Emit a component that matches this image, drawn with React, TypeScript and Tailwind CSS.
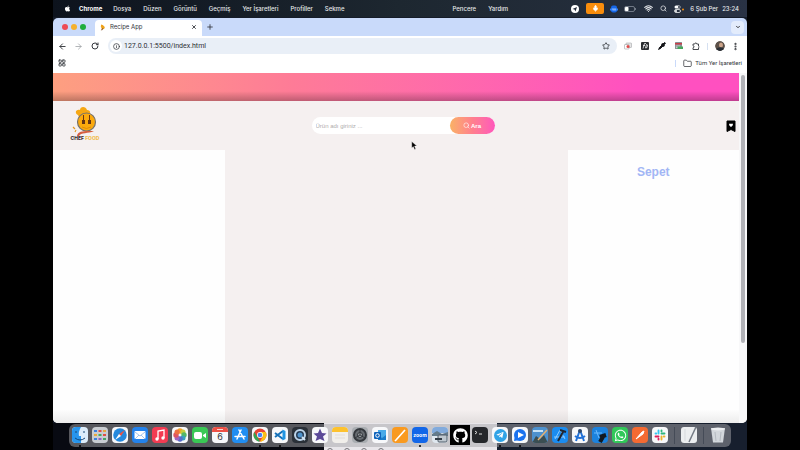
import type { ReactNode } from "react";
import {
  ArrowLeft,
  ArrowRight,
  ChevronDown,
  EllipsisVertical,
  Folder,
  Info,
  LayoutGrid,
  Mic,
  Pipette,
  Plus,
  RotateCw,
  Search,
  Star,
  Wifi,
  X,
} from "lucide-react";
import { FaApple, FaGithub, FaTelegramPlane, FaWhatsapp } from "react-icons/fa";

const menus = ["Dosya", "Düzen", "Görüntü", "Geçmiş", "Yer İşaretleri", "Profiller", "Sekme"];

function IconButton({ label, children, className = "" }: { label: string; children?: ReactNode; className?: string }) {
  return (
    <button type="button" aria-label={label} className={`flex shrink-0 items-center justify-center ${className}`}>
      {children}
    </button>
  );
}

function MenuBar() {
  return (
    <header className="flex h-[17px] shrink-0 items-center bg-linear-to-r from-[#0d131d] via-[#1d2730] to-[#293244] pr-2 pl-[11px] text-[6px] leading-[8px] font-medium text-[#e6e8eb]">
      <FaApple className="size-[7px] text-white" />
      <span className="ml-[8px] font-bold text-white">Chrome</span>
      <nav className="ml-[11px] flex flex-1 gap-[12px] whitespace-nowrap">
        {menus.map((m) => (
          <button type="button" key={m}>{m}</button>
        ))}
        <button type="button" className="ml-[96px]">Pencere</button>
        <button type="button">Yardım</button>
      </nav>
      <div className="flex items-center">
        <svg viewBox="0 0 16 16" className="size-[8px]">
          <circle cx="8" cy="8" r="8" fill="#fff" />
          <path d="M3 8l9-4-3 9-2-4z" fill="#222a38" />
        </svg>
        <span className="ml-[7px] flex h-[11px] w-[18px] items-center justify-center rounded-[2px] bg-[#f98d0c]">
          <Mic className="size-[7px] fill-white text-white" />
        </span>
        <svg viewBox="0 0 16 16" className="ml-[6px] size-[8px]">
          <rect x="2" y="1" width="12" height="14" rx="4" fill="#1667e8" />
          <path d="M0 7h16v4H0z" fill="#2f80ff" />
          <path d="M4 8h8M5 10h7" stroke="#dbe8ff" />
        </svg>
        <svg viewBox="0 0 24 12" className="ml-[6px] h-[6px] w-[12px]">
          <rect x="1" y="1" width="20" height="10" rx="3" fill="none" stroke="#8a919d" strokeWidth="1.5" />
          <rect x="2" y="2" width="7" height="8" rx="1.5" fill="#fff" />
          <path d="M23 4v4" stroke="#8a919d" strokeWidth="1.5" />
        </svg>
        <Wifi strokeWidth={3} className="ml-[8px] size-[9px]" />
        <Search strokeWidth={2.5} className="ml-[7px] size-[7px]" />
        <svg viewBox="0 0 20 16" className="ml-[6px] h-[8px] w-[12px]">
          <rect x="1" y="1" width="12" height="6" rx="3" fill="#fff" />
          <rect x="1" y="9" width="12" height="6" rx="3" fill="none" stroke="#fff" strokeWidth="1.5" />
          <circle cx="10" cy="4" r="2" fill="#28303f" />
          <circle cx="4" cy="12" r="2" fill="#fff" />
          <circle cx="18" cy="9" r="2" fill="#f98d0c" />
        </svg>
        <span className="ml-[5px] whitespace-nowrap">6 Şub Per</span>
        <time className="ml-[4px]">23:24</time>
      </div>
    </header>
  );
}

function TabStrip() {
  return (
    <div className="flex h-[18px] shrink-0 items-center bg-[#c9dafa] pr-[3px] pl-[9px]">
      <div className="flex gap-[3px]">
        <IconButton label="Kapat" className="size-[6px] rounded-full bg-[#ee4b55]" />
        <IconButton label="Küçült" className="size-[6px] rounded-full bg-[#f5b02c]" />
        <IconButton label="Büyüt" className="size-[6px] rounded-full bg-[#1fae3c]" />
      </div>
      <div className="ml-[9px] flex h-[16px] w-[107px] items-center self-end rounded-t-[4px] bg-white pr-[5px] pb-[2px] pl-[4px] text-[6px] leading-[8px] text-[#33363b]">
        <svg viewBox="0 0 16 16" className="size-[7px]">
          <path d="M5 1l5 2-1 5-5-2z" fill="#f0a31c" />
          <circle cx="9" cy="8" r="4" fill="#eea21a" />
          <path d="M4 14l4-5 2 2-3 3z" fill="#8b572a" />
        </svg>
        <span className="ml-[4px] flex-1">Recipe App</span>
        <IconButton label="Sekmeyi kapat"><X strokeWidth={3.5} className="size-[6px]" /></IconButton>
      </div>
      <IconButton label="Yeni sekme" className="ml-[4px]"><Plus strokeWidth={2.5} className="size-[8px] text-[#30343b]" /></IconButton>
      <IconButton label="Sekme ara" className="ml-auto size-[13px] rounded-[4px] bg-[#e3ecfc]">
        <ChevronDown strokeWidth={3} className="size-[6px]" />
      </IconButton>
    </div>
  );
}

function Toolbar() {
  return (
    <div className="flex h-[20px] shrink-0 items-center bg-white pr-[7px] pl-[5px] text-[#34373c]">
      <IconButton label="Geri"><ArrowLeft strokeWidth={2.5} className="size-[9px]" /></IconButton>
      <IconButton label="İleri" className="ml-[7px]"><ArrowRight strokeWidth={2} className="size-[9px] text-[#9a9da2]" /></IconButton>
      <IconButton label="Yenile" className="ml-[8px]"><RotateCw strokeWidth={3} className="size-[8px]" /></IconButton>
      <div className="ml-[9px] flex h-[16px] flex-1 items-center rounded-full bg-[#e9eff7] pr-[7px] pl-[2px]">
        <IconButton label="Site bilgileri" className="size-[12px] rounded-full bg-white"><Info strokeWidth={2.5} className="size-[7px]" /></IconButton>
        <input
          aria-label="Adres"
          defaultValue="127.0.0.1:5500/index.html"
          className="ml-[2px] min-w-0 flex-1 bg-transparent font-['Roboto',sans-serif] text-[7px] leading-[8px] text-[#2d3034] outline-none"
        />
        <IconButton label="Yer işareti ekle"><Star strokeWidth={2.5} className="size-[8px]" /></IconButton>
      </div>
      <div className="ml-[7px] flex items-center gap-[9px]">
        <IconButton label="Ekran görüntüsü">
          <svg viewBox="0 0 16 16" className="size-[8px]">
            <rect x="4" y="2" width="11" height="9" rx="1" fill="#e6e6e6" stroke="#97999c" />
            <rect x="1" y="5" width="9" height="9" rx="1" fill="#fff" stroke="#8b8d91" />
            <circle cx="8" cy="9" r="3" fill="#e04a48" />
          </svg>
        </IconButton>
        <IconButton label="Yazı tipi bulucu">
          <svg viewBox="0 0 16 16" className="size-[8px]">
            <rect width="16" height="16" rx="2" fill="#2b2d31" />
            <path d="M4 13L7 3h3M4 7h4M9 12l2-7 2 1-1 5z" fill="none" stroke="#fff" strokeWidth="1.5" />
          </svg>
        </IconButton>
        <IconButton label="Renk seçici"><Pipette strokeWidth={3} className="size-[8px] fill-[#16181b] text-[#16181b]" /></IconButton>
        <IconButton label="Form doldurucu">
          <svg viewBox="0 0 16 16" className="size-[8px]">
            <rect width="14" height="14" rx="1" fill="#8d9196" />
            <path d="M0 2h14v3H0z" fill="#ca3d49" />
            <path d="M2 8h8M2 11h5" stroke="#fff" />
            <path d="M5 9h11v5H5z" fill="#46a75c" />
          </svg>
        </IconButton>
        <IconButton label="Uzantılar">
          <svg viewBox="0 0 16 16" className="size-[8px]">
            <path d="M2 4h3.500a2 2 0 0 1 4 0H13v4a2 2 0 0 1 0 3.500V15H2v-3.500a2 2 0 0 0 0-4z" fill="none" stroke="#34373c" strokeWidth="1.800" strokeLinejoin="round" />
          </svg>
        </IconButton>
      </div>
      <span className="ml-[7px] h-[7px] w-px bg-[#d5e0f1]" />
      <IconButton label="Profil" className="ml-[7px]">
        <svg viewBox="0 0 20 20" className="size-[10px] rounded-full">
          <circle cx="10" cy="10" r="10" fill="#5c5149" />
          <ellipse cx="12" cy="8" rx="4" ry="5" fill="#cda58b" />
          <path d="M2 17c4-6 14-6 16 0l-5 3H6z" fill="#292e35" />
        </svg>
      </IconButton>
      <IconButton label="Menü" className="ml-[6px]"><EllipsisVertical strokeWidth={3.5} className="size-[9px]" /></IconButton>
    </div>
  );
}

function BookmarksBar() {
  return (
    <div className="flex h-[17px] shrink-0 items-center bg-white px-[5px] pb-[3px] font-['Roboto',sans-serif] text-[6px] leading-[8px] text-[#34373c]">
      <IconButton label="Uygulamalar"><LayoutGrid strokeWidth={2.5} className="size-[8px]" /></IconButton>
      <span className="ml-auto h-[7px] w-px bg-[#c9dafa]" />
      <button type="button" className="ml-[7px] flex items-center gap-[3px] whitespace-nowrap">
        <Folder strokeWidth={2} className="size-[9px]" />
        Tüm Yer İşaretleri
      </button>
    </div>
  );
}

function ChefLogo() {
  return (
    <a href="#" aria-label="Chef Food" className="flex w-[34px] flex-col items-center pb-[3px]">
      <svg viewBox="0 0 34 30" className="h-[30px] w-[34px]">
        <path d="M10 8c-4-2-2-6 2-5 0-4 6-4 7 0 4 0 4 4 1 5l-9 2z" fill="#f6a713" />
        <circle cx="18.500" cy="15" r="9" fill="#fba90d" stroke="#77736c" strokeWidth="1.200" />
        <path d="M15.500 8v6M21.500 8v6" stroke="#653413" strokeWidth="1" />
        <path d="M14 13h3v4h-3zM20 13h3v4h-3z" fill="#653413" />
        <path d="M14 20q4.500 3 9 0" fill="none" stroke="#d88709" strokeWidth=".8" />
        <path d="M9 29c1-6 9-5 17-5-6 3-13 1-15 5z" fill="#d65f3f" />
        <path d="M5 20l2 2M8 23l-1 2" stroke="#e29a26" strokeWidth="1.200" />
      </svg>
      <span className="-mt-px text-[5px] leading-[5px] font-extrabold whitespace-nowrap text-[#3a302f]">
        CHEF <span className="text-[#f2bd4e]">FOOD</span>
      </span>
    </a>
  );
}

function RecipePage() {
  return (
    <div className="flex min-h-0 flex-1 bg-white">
      <div className="flex min-w-0 flex-1 flex-col bg-[#f5f0f0]">
        <div className="h-[28px] shrink-0 bg-linear-to-r from-[#fd9f80] via-[#fe7b97] via-35% to-[#ff50c0] to-85%">
          <div className="h-full bg-linear-to-b from-transparent from-65% to-black/25" />
        </div>
        <div className="flex h-[49px] shrink-0 items-center justify-between pr-[3px] pl-[15px]">
          <ChefLogo />
          <form className="flex h-[17px] w-[183px] rounded-full bg-white" onSubmit={(e) => e.preventDefault()}>
            <input
              aria-label="Ürün adı"
              placeholder="Ürün adı giriniz ..."
              className="min-w-0 flex-1 pl-[4px] font-['Liberation_Sans',sans-serif] text-[6px] leading-[8px] outline-none placeholder:text-[#b0acac]"
            />
            <button
              type="submit"
              className="flex w-[45px] items-center justify-center gap-px rounded-full bg-linear-to-r from-[#f9b164] via-[#ff7f8d] to-[#ff56bb] font-['Liberation_Sans',sans-serif] text-[6px] leading-[8px] font-bold text-white"
            >
              <Search strokeWidth={2} className="size-[7px]" />
              Ara
            </button>
          </form>
          <div className="flex w-[32px] justify-end">
            <IconButton label="Kaydedilenler">
              <svg viewBox="0 0 10 12" className="h-[12px] w-[10px]">
                <path d="M1 1h8v10.500L5 9.500l-4 2z" fill="#000" stroke="#000" strokeLinejoin="round" />
                <path d="M3 4q1-1 2 0 1-1 2 0 0 2-2 3-2-1-2-3z" fill="#fff" />
              </svg>
            </IconButton>
          </div>
        </div>
        <main className="grid min-h-0 flex-1 grid-cols-4">
          <aside className="bg-linear-to-b from-[#fefefe] from-95% to-[#ececec]" />
          <section className="col-span-2 bg-linear-to-b from-[#f5f0f0] from-95% to-[#e2dede]" />
          <aside className="bg-linear-to-b from-[#fefefe] from-95% to-[#ececec] pt-[14px] text-center">
            <h2 className="font-['Liberation_Sans',sans-serif] text-[12px] leading-[16px] font-bold text-[#a2b6f5]">Sepet</h2>
          </aside>
        </main>
      </div>
      <div className="w-[8px] shrink-0 bg-[#f8f8f9] px-[2px] pt-[2px]">
        <div className="h-[77%] rounded-full bg-[#b1b2b7]" />
      </div>
    </div>
  );
}

type DockApp = { name: string; bg: string; art: ReactNode; running?: boolean };

const white = "bg-[#f7f8fa]";
const apps: DockApp[] = [
  { name: "Finder", bg: "bg-[#dcecfa]", running: true, art: <><path d="M0 0h9q-3 5-2 9h2v7H0z" fill="#2795ed" /><path d="M4 4v2M12 4v2M3 11q5 4 10 0" stroke="#174878" fill="none" /></> },
  { name: "Launchpad", bg: "bg-[#c9cdd2]", art: <><path d="M2 3h3v2H2zM2 11h3v2H2z" fill="#3a80df" /><path d="M6.500 3h3v2h-3zM11 7h3v2h-3z" fill="#df5144" /><path d="M11 3h3v2h-3zM2 7h3v2H2z" fill="#e7a93d" /><path d="M6.500 7h3v2h-3zM11 11h3v2h-3z" fill="#43a862" /><path d="M6.500 11h3v2h-3z" fill="#8f60c7" /></> },
  { name: "Safari", bg: white, art: <><circle cx="8" cy="8" r="6.800" fill="#2589dd" /><path d="M13 3L9 9 7 7z" fill="#ec5143" /><path d="M3 13l4-6 2 2z" fill="#fff" /></> },
  { name: "Mail", bg: "bg-[#2382ec]", art: <><rect x="2.500" y="4" width="11" height="8" rx="1" fill="#fff" /><path d="M3 5l5 4 5-4M3 12l4-4M13 12L9 8" fill="none" stroke="#8ab6e8" strokeWidth=".8" /></> },
  { name: "Müzik", bg: "bg-[#f23b52]", art: <><path d="M6 12V4l6-1v8" fill="none" stroke="#fff" strokeWidth="1.300" /><circle cx="5" cy="12" r="1.700" fill="#fff" /><circle cx="11" cy="11" r="1.700" fill="#fff" /></> },
  { name: "Fotoğraflar", bg: white, art: <><circle cx="8" cy="4" r="2.800" fill="#f5a12b" /><circle cx="11" cy="5" r="2.500" fill="#c8cd3e" /><circle cx="12" cy="8" r="2.700" fill="#55b866" /><circle cx="11" cy="11" r="2.500" fill="#3aa2be" /><circle cx="8" cy="12" r="2.700" fill="#596dc9" /><circle cx="5" cy="11" r="2.500" fill="#a264bf" /><circle cx="4" cy="8" r="2.700" fill="#df5563" /><circle cx="5" cy="5" r="2.500" fill="#ee7042" /></> },
  { name: "FaceTime", bg: "bg-[#3ac855]", art: <><rect x="2" y="5" width="8" height="7" rx="2" fill="#fff" /><path d="M11 8l3-2v5l-3-2z" fill="#fff" /></> },
  { name: "Takvim", bg: white, art: <><path d="M0 0h16v5H0z" fill="#ed5146" /><path d="M5 2.500h6" stroke="#fbd6d2" /></> },
  { name: "App Store", bg: "bg-[#218ef1]", art: <path d="M9 3L5 12M7 3l5 9M3 9.500h10" stroke="#fff" strokeWidth="1.500" strokeLinecap="round" /> },
  { name: "Chrome", bg: white, running: true, art: <><circle cx="8" cy="8" r="6.500" fill="#e64436" /><path d="M2.300 5L6 11l2 3.500A6.500 6.500 0 0 1 2.300 5z" fill="#34a653" /><path d="M8 5h5.700A6.500 6.500 0 0 1 8 14.500l3-5z" fill="#f9bf15" /><circle cx="8" cy="8" r="3" fill="#fff" /><circle cx="8" cy="8" r="2.300" fill="#4285f4" /></> },
  { name: "VS Code", bg: white, running: true, art: <><path d="M3 6l8 6M3 10l8-6" stroke="#1470b8" strokeWidth="2" /><path d="M10.500 2.500l3 1.500v8l-3 1.500z" fill="#2196e3" /></> },
  { name: "QuickTime", bg: "bg-[#2a3038]", art: <><circle cx="8" cy="8" r="5" fill="#263c55" stroke="#bcd3e8" strokeWidth="2" /><circle cx="8" cy="8" r="2.500" fill="#4f93cc" /><path d="M10 10l3 3" stroke="#d5e7f6" strokeWidth="2" /></> },
  { name: "iMovie", bg: white, art: <path d="M8 1.500l2 4.500 4.500.500L11 9.500l1.500 4.500L8 12l-4.500 2L5 9.500 1.500 6.500 6 6z" fill="#5c4a99" /> },
  { name: "Notlar", bg: "bg-[#f1efeb]", art: <><path d="M0 0h16v5H0z" fill="#fdc22e" /><path d="M3 8h10M3 11h10" stroke="#d9d7d2" strokeWidth=".7" /></> },
  { name: "Ayarlar", bg: "bg-[#a9adb1]", art: <><circle cx="8" cy="8" r="6" fill="#666b70" stroke="#34383d" strokeWidth="2" /><circle cx="8" cy="8" r="2.500" fill="#a6aaae" stroke="#34383d" /><path d="M8 8V2M8 8l5 3M8 8l-5 3" stroke="#34383d" /></> },
  { name: "Outlook", bg: white, art: <><rect x="6" y="3" width="8" height="10" fill="#48aae8" /><path d="M6 8l4 3 4-3v5H6z" fill="#197cc9" /><rect x="2" y="5" width="7" height="7" rx="1" fill="#0d63bb" /><circle cx="5.500" cy="8.500" r="1.800" fill="none" stroke="#fff" /></> },
  { name: "Pages", bg: "bg-[#f99a20]", art: <path d="M4 13l9-10M3 14l1-1" stroke="#fff" strokeWidth="1.700" /> },
  { name: "Zoom", bg: "bg-[#1266e8]", running: true, art: null },
  { name: "Önizleme", bg: "bg-[#dfe7ef]", art: <><path d="M0 0h16v6H0z" fill="#81aadc" /><path d="M0 7l5-3 5 3 6-2v4H0z" fill="#647b8c" /><rect x="6" y="8" width="9" height="7" rx="1" fill="#bec7cf" stroke="#505c68" /><path d="M3 12h7" stroke="#333c46" strokeWidth="2" /></> },
  { name: "GitHub", bg: "bg-black", art: null },
  { name: "Terminal", bg: "bg-[#25272b]", art: <path d="M3 4l2 1.500L3 7M7 7h3" fill="none" stroke="#ddd" /> },
  { name: "Telegram", bg: white, running: true, art: null },
  { name: "Toplantı", bg: white, running: true, art: <><circle cx="8" cy="8" r="6" fill="#1b72ef" /><path d="M2 14l1-6 5 5z" fill="#1b72ef" /><path d="M6 5l6 3-6 3z" fill="#fff" /></> },
  { name: "Xcode Görsel", bg: "bg-[#4d91ce]", art: <><path d="M0 16l4-7 4 3 4-4 4 8z" fill="#3b4e52" /><path d="M1 4h10" stroke="#c8e2f5" strokeWidth="2" /><path d="M6 13l9-10" stroke="#e5b171" strokeWidth="1.500" /></> },
  { name: "Xcode", bg: "bg-[#1b8cf0]", art: <><path d="M3 12l5-9 5 9M2 10h11" fill="none" stroke="#8dcbff" /><path d="M6 14l5-9M8 3l6 2" stroke="#202630" strokeWidth="2" /></> },
  { name: "Android Studio", bg: white, art: <><path d="M8 3L4 14M8 3l4 11M3 9q5 4 10 0" fill="none" stroke="#2372d8" strokeWidth="2" /><circle cx="8" cy="4" r="2" fill="#304b71" /></> },
  { name: "Simülatör", bg: "bg-[#1c82de]", art: <><path d="M2 6h8M4 3l3 8" stroke="#69b9ff" /><path d="M8 15l4-7M8 10l6-2" stroke="#121820" strokeWidth="4" /></> },
  { name: "WhatsApp", bg: "bg-[#31c759]", art: null },
  { name: "Postman", bg: "bg-[#f46a32]", art: <path d="M4 12l6-7 2-1-1 3z" fill="#fff" stroke="#fff" /> },
  { name: "Slack", bg: white, art: null },
];

function DockIcon({ app }: { app: DockApp }) {
  return (
    <button type="button" aria-label={app.name} className={`relative size-[16px] shrink-0 ${app.name === "GitHub" ? "outline outline-[2px] outline-black" : "rounded-[4px]"} ${app.bg}`}>
      <svg viewBox="0 0 16 16" className="size-[16px] rounded-[4px]" fill="none">{app.art}</svg>
      <span className="absolute inset-0 flex items-center justify-center">
        {app.name === "Takvim" && <span className="pt-[4px] text-[9px] leading-[10px] text-[#333]">6</span>}
        {app.name === "Zoom" && <span className="text-[5px] leading-[6px] font-bold text-white">zoom</span>}
        {app.name === "GitHub" && <FaGithub className="size-[15px] text-white" />}
        {app.name === "Telegram" && (
          <span className="flex size-[13px] items-center justify-center rounded-full bg-[#31a4e7]">
            <FaTelegramPlane className="size-[8px] text-white" />
          </span>
        )}
        {app.name === "WhatsApp" && <FaWhatsapp className="size-[13px] text-white" />}
        {app.name === "Slack" && (
          <svg viewBox="0 0 16 16" className="size-[12px]" strokeWidth="2.500" strokeLinecap="round">
            <path d="M6 2v4M2 6h1" stroke="#36c5f0" />
            <path d="M10 6h4M10 2v1" stroke="#2eb67d" />
            <path d="M10 10v4M13 10h1" stroke="#ecb22e" />
            <path d="M2 10h4M6 13v1" stroke="#e01e5a" />
          </svg>
        )}
      </span>
      {app.running && <span className="absolute -bottom-[4px] left-1/2 size-[2px] -translate-x-1/2 rounded-full bg-black" />}
    </button>
  );
}

function Dock() {
  return (
    <footer className="flex h-[27px] shrink-0 flex-col bg-[linear-gradient(to_right,#080a12_39%,#e8e6ea_39%,#e8e6ea_64%,#171f2e_64%)] px-[16px] pt-px">
      <div className="flex h-[23px] shrink-0 items-center gap-[4px] rounded-[6px] bg-[#a5a5aa]/50 px-[3px] pb-px">
        {apps.map((a) => (
          <DockIcon key={a.name} app={a} />
        ))}
        <span className="mx-[2px] h-[17px] w-px bg-[#454b57]" />
        <IconButton label="Metin Düzenleyici" className="size-[16px] rounded-[3px] bg-[#eceef0]">
          <svg viewBox="0 0 16 16" className="size-[16px]"><path d="M8 15l7-15" stroke="#747b85" strokeWidth="1.500" /><path d="M4 2v12" stroke="#d6d9dd" /></svg>
        </IconButton>
        <span className="mx-[2px] h-[17px] w-px bg-[#454b57]" />
        <IconButton label="Çöp Sepeti" className="size-[16px]">
          <svg viewBox="0 0 16 16" className="size-[16px]"><path d="M1 1h14l-2 14.500H3z" fill="#d3d7dc" /><ellipse cx="8" cy="2" rx="7" ry="1.500" fill="#eef0f2" /><path d="M5 5l1 9M11 5l-1 9" stroke="#b5bac1" /></svg>
        </IconButton>
      </div>
      <div className="flex min-h-0 flex-1 gap-[11px] overflow-hidden pt-px pl-[39%]">
        <span className="size-[6px] shrink-0 rounded-full border border-[#77757a]" />
        <span className="size-[6px] shrink-0 rounded-full border border-[#77757a]" />
        <span className="size-[6px] shrink-0 rounded-full border border-[#77757a]" />
        <span className="size-[6px] shrink-0 rounded-full border border-[#77757a]" />
      </div>
    </footer>
  );
}

export default function App() {
  return (
    <div className="h-screen bg-black px-[53px] font-['Inter',sans-serif]">
      <div className="relative flex h-full flex-col bg-[#151c29]">
        <MenuBar />
        <div className="mt-px flex min-h-0 flex-1 flex-col overflow-hidden rounded-[5px]">
          <TabStrip />
          <Toolbar />
          <BookmarksBar />
          <RecipePage />
        </div>
        <Dock />
        <svg viewBox="0 0 10 16" className="absolute top-[141px] left-[358px] h-[9px] w-[6px]">
          <path d="M1 1v11l3-2 2 5 2-1-2-5h4z" fill="#000" stroke="#fff" strokeWidth=".6" />
        </svg>
      </div>
    </div>
  );
}
